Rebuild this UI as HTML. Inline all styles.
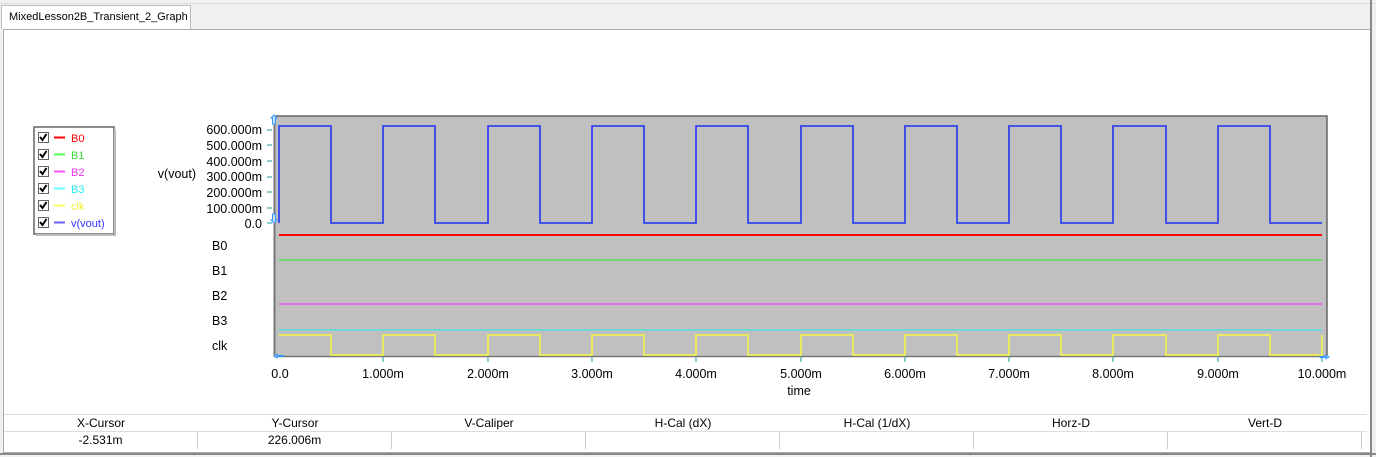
<!DOCTYPE html>
<html><head><style>
body{margin:0;width:1376px;height:457px;background:#f0f0f0;font-family:"Liberation Sans",sans-serif;overflow:hidden;position:relative}
.abs{position:absolute}
</style></head><body>
<div class="abs" style="left:0;top:3px;width:1376px;height:1px;background:#ddd"></div>
<div class="abs" style="left:1px;top:5px;width:190px;height:24px;background:#fff;border:1px solid #bbb;border-bottom:none;font-size:11px;line-height:22px;padding-left:7px;box-sizing:border-box">MixedLesson2B_Transient_2_Graph</div>
<div class="abs" style="left:3px;top:29px;width:1368px;height:424px;border:1px solid #aaa;background:#fff;box-sizing:border-box"></div>
<div class="abs" style="left:1370px;top:0;width:2px;height:457px;background:#888"></div>
<div class="abs" style="left:0;top:453px;width:1376px;height:2px;background:#888"></div>
<svg class="abs" style="left:0;top:0" width="1376" height="457" font-family="Liberation Sans, sans-serif" font-size="12">
<rect x="34" y="127" width="80" height="107" fill="#fff" stroke="#666" stroke-width="1.5"/>
<line x1="115" y1="129" x2="115" y2="236" stroke="#bbb" stroke-width="2"/>
<line x1="36" y1="235" x2="115" y2="235" stroke="#bbb" stroke-width="2"/>
<g font-size="11">
<g id="cb"><rect x="38.5" y="132.5" width="10" height="10" fill="#fff" stroke="#666"/><path d="M40 137l2.5 3 4-6" stroke="#000" stroke-width="2" fill="none"/></g>
<use href="#cb" y="17"/><use href="#cb" y="34"/><use href="#cb" y="51"/><use href="#cb" y="68"/><use href="#cb" y="85"/>
<line x1="54" y1="137.5" x2="65" y2="137.5" stroke="#f00" stroke-width="2"/><text x="71" y="142" fill="#f00">B0</text>
<line x1="54" y1="154.5" x2="65" y2="154.5" stroke="#5f5" stroke-width="2"/><text x="71" y="159" fill="#3d3">B1</text>
<line x1="54" y1="171.5" x2="65" y2="171.5" stroke="#f5f" stroke-width="2"/><text x="71" y="176" fill="#e3e">B2</text>
<line x1="54" y1="188.5" x2="65" y2="188.5" stroke="#6ff" stroke-width="2"/><text x="71" y="193" fill="#2ee">B3</text>
<line x1="54" y1="205.5" x2="65" y2="205.5" stroke="#ff6" stroke-width="2"/><text x="71" y="210" fill="#ee3">clk</text>
<line x1="54" y1="222.5" x2="65" y2="222.5" stroke="#66f" stroke-width="2"/><text x="71" y="227" fill="#33f">v(vout)</text>
</g>
<rect x="274" y="116" width="1053" height="241" fill="#c0c0c0"/>
<path d="M274 116H1327V357" stroke="#666" fill="none" stroke-width="1.5"/>
<line x1="274.5" y1="116" x2="274.5" y2="357" stroke="#777" stroke-width="2"/>
<line x1="274" y1="356.5" x2="1327" y2="356.5" stroke="#777" stroke-width="1.5"/>
<g fill="#000" text-anchor="end" font-size="12.5">
<text x="262" y="134">600.000m</text><text x="262" y="150">500.000m</text><text x="262" y="166">400.000m</text><text x="262" y="181">300.000m</text><text x="262" y="197">200.000m</text><text x="262" y="213">100.000m</text><text x="262" y="228">0.0</text>
<text x="196" y="178">v(vout)</text>
</g>
<g stroke="#6bb" stroke-width="1.5"><path d="M267 130h5M267 145h5M267 161h5M267 177h5M267 192h5M267 208h5M267 223h5"/></g>
<g font-size="12.5"><text x="212" y="250">B0</text><text x="212" y="275">B1</text><text x="212" y="300">B2</text><text x="212" y="325">B3</text><text x="212" y="350">clk</text></g>
<path d="M279 223V126H331V223H383V126H435V223H488V126H540V223H592V126H644V223H696V126H748V223H801V126H853V223H905V126H957V223H1009V126H1061V223H1113V126H1166V223H1218V126H1270V223H1322" stroke="#3344ee" stroke-width="1.8" fill="none"/>
<line x1="279" y1="235" x2="1322" y2="235" stroke="#f00" stroke-width="2"/>
<line x1="279" y1="260" x2="1322" y2="260" stroke="#5d5" stroke-width="1.5"/>
<line x1="279" y1="304" x2="1322" y2="304" stroke="#e5e" stroke-width="1.5"/>
<line x1="279" y1="330" x2="1322" y2="330" stroke="#5dd" stroke-width="1.5"/>
<path d="M279 335H331V355H383V335H435V355H488V335H540V355H592V335H644V355H696V335H748V355H801V335H853V355H905V335H957V355H1009V335H1061V355H1113V335H1166V355H1218V335H1270V355H1322V335" stroke="#ee5" stroke-width="1.8" fill="none"/>
<g stroke="#6bb" stroke-width="1.5"><path d="M383 357v5M488 357v5M592 357v5M696 357v5M801 357v5M905 357v5M1009 357v5M1113 357v5M1218 357v5M1322 357v5"/></g>
<g fill="#000" text-anchor="middle" font-size="12.5">
<text x="280" y="378">0.0</text><text x="383" y="378">1.000m</text><text x="488" y="378">2.000m</text><text x="592" y="378">3.000m</text><text x="696" y="378">4.000m</text><text x="801" y="378">5.000m</text><text x="905" y="378">6.000m</text><text x="1009" y="378">7.000m</text><text x="1113" y="378">8.000m</text><text x="1218" y="378">9.000m</text><text x="1322" y="378">10.000m</text>
<text x="799" y="395">time</text>
</g>
<g fill="#cde" stroke="#39f" stroke-width="1"><path d="M277 118l-3-3-3 3h1.5v6h3v-6z"/><path d="M277 220l-3 3-3-3h1.5v-6h3v6z"/><path d="M277 358l-3-2 3-2v1.5h6v1h-6z"/><path d="M1326 355l3 2-3 2v-1.5h-6v-1h6z"/></g>
</svg>
<div class="abs" style="left:4px;top:414px;width:1363px;height:1px;background:#ddd"></div>
<div class="abs" style="left:4px;top:431px;width:1363px;height:1px;background:#ddd"></div>
<div class="abs" style="left:4px;top:414px;width:1363px;font-size:12px;display:flex">
<div style="width:194px;text-align:center;line-height:18px">X-Cursor</div><div style="width:194px;text-align:center;line-height:18px">Y-Cursor</div><div style="width:194px;text-align:center;line-height:18px">V-Caliper</div><div style="width:194px;text-align:center;line-height:18px">H-Cal (dX)</div><div style="width:194px;text-align:center;line-height:18px">H-Cal (1/dX)</div><div style="width:194px;text-align:center;line-height:18px">Horz-D</div><div style="width:194px;text-align:center;line-height:18px">Vert-D</div>
</div>
<div class="abs" style="left:4px;top:432px;width:1363px;font-size:12px;display:flex;height:17px">
<div style="width:193px;border-right:1px solid #ccc;text-align:center;line-height:17px">-2.531m</div><div style="width:193px;border-right:1px solid #ccc;text-align:center;line-height:17px">226.006m</div><div style="width:193px;border-right:1px solid #ccc"></div><div style="width:193px;border-right:1px solid #ccc"></div><div style="width:193px;border-right:1px solid #ccc"></div><div style="width:193px;border-right:1px solid #ccc"></div><div style="width:193px;border-right:1px solid #ccc"></div>
</div>
</body></html>
